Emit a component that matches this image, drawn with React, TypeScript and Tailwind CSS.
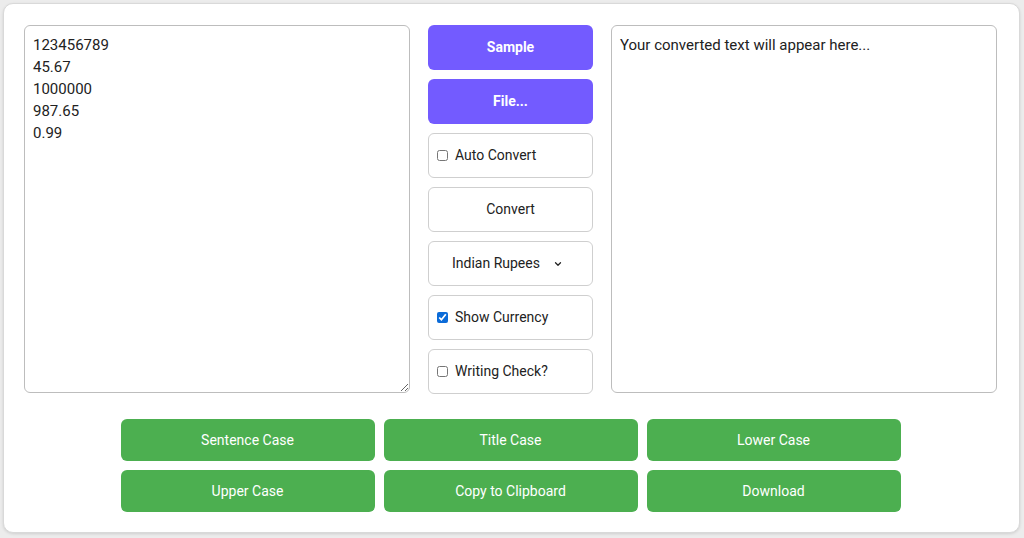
import React, { useState } from 'react';

const boxed =
  'h-[45px] rounded-[6px] border border-[#cfcfcf] bg-white flex items-center text-[14px] text-[#222]';

const CaseButton: React.FC<{ label: string }> = ({ label }) => (
  <button className="h-[42px] rounded-[6px] bg-[#4caf50] text-white text-[14px] font-normal">
    {label}
  </button>
);

export default function App() {
  const [auto, setAuto] = useState(false);
  const [showCur, setShowCur] = useState(true);
  const [check, setCheck] = useState(false);

  return (
    <div
      className="w-[1024px] h-[538px] bg-[#ececec] p-[3px] pr-[4px] pb-[5px]"
      style={{ fontFamily: 'Roboto, "Noto Sans", sans-serif' }}
    >
      <div className="h-full rounded-[10px] border border-[#d9d9d9] bg-white pt-[21px] pl-[20px] shadow-[0_1px_3px_rgba(0,0,0,0.12)]">
        <div className="flex gap-[18px]">
          <textarea
            className="w-[386px] h-[368px] rounded-[6px] border border-[#bdbdbd] px-[8px] py-[8px] text-[15px] leading-[22px] text-[#222] outline-none resize"
            defaultValue={'123456789\n45.67\n1000000\n987.65\n0.99'}
          />
          <div className="w-[165px] flex flex-col gap-[9px]">
            <button className="h-[45px] rounded-[6px] bg-[#735bff] text-white text-[14px] font-bold">
              Sample
            </button>
            <button className="h-[45px] rounded-[6px] bg-[#735bff] text-white text-[14px] font-bold">
              File...
            </button>
            <label className={`${boxed} pl-[8px] gap-[7px]`}>
              <input
                type="checkbox"
                checked={auto}
                onChange={() => setAuto(!auto)}
                className="w-[11px] h-[11px] m-0"
              />
              Auto Convert
            </label>
            <button className={`${boxed} justify-center`}>Convert</button>
            <div className={`${boxed} pl-[23px] gap-[13px]`}>
              <span>Indian Rupees</span>
              <svg width="10" height="10" viewBox="0 0 24 24" fill="none" stroke="#222" strokeWidth="3" strokeLinecap="round" strokeLinejoin="round">
                <path d="M6 9l6 6 6-6" />
              </svg>
            </div>
            <label className={`${boxed} pl-[8px] gap-[7px]`}>
              <input
                type="checkbox"
                checked={showCur}
                onChange={() => setShowCur(!showCur)}
                className="w-[11px] h-[11px] m-0 accent-[#0b6bd8]"
              />
              Show Currency
            </label>
            <label className={`${boxed} pl-[8px] gap-[7px]`}>
              <input
                type="checkbox"
                checked={check}
                onChange={() => setCheck(!check)}
                className="w-[11px] h-[11px] m-0"
              />
              Writing Check?
            </label>
          </div>
          <div className="w-[386px] h-[368px] rounded-[6px] border border-[#bdbdbd] px-[8px] py-[8px] text-[15px] leading-[22px] text-[#222]">
            Your converted text will appear here...
          </div>
        </div>
        <div className="mt-[25px] grid grid-cols-[254px_254px_254px] gap-[9px] justify-center pr-[22px]">
          <CaseButton label="Sentence Case" />
          <CaseButton label="Title Case" />
          <CaseButton label="Lower Case" />
          <CaseButton label="Upper Case" />
          <CaseButton label="Copy to Clipboard" />
          <CaseButton label="Download" />
        </div>
      </div>
    </div>
  );
}
